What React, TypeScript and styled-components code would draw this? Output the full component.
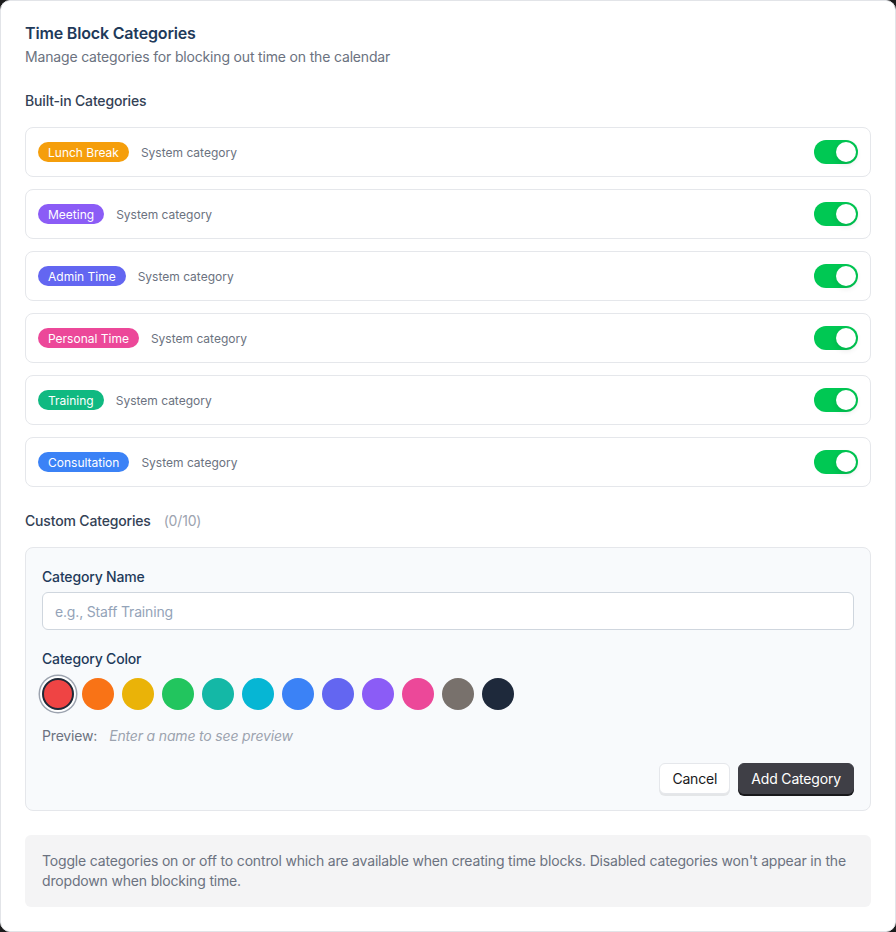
import { createGlobalStyle, styled } from 'styled-components';

const GlobalStyle = createGlobalStyle`
  html, body {
    margin: 0;
    padding: 0;
    background: #1c1c1c;
  }
  * {
    box-sizing: border-box;
  }
  body {
    font-family: Inter, "Liberation Sans", sans-serif;
    letter-spacing: -0.17px;
    -webkit-font-smoothing: antialiased;
  }
`;

// data

const builtIn = [
  { name: 'Lunch Break', color: '#f59e0b' },
  { name: 'Meeting', color: '#8b5cf6' },
  { name: 'Admin Time', color: '#6366f1' },
  { name: 'Personal Time', color: '#ec4899' },
  { name: 'Training', color: '#10b981' },
  { name: 'Consultation', color: '#3b82f6' },
];

const swatches = [
  '#ef4444',
  '#f97316',
  '#eab308',
  '#22c55e',
  '#14b8a6',
  '#06b6d4',
  '#3b82f6',
  '#6366f1',
  '#8b5cf6',
  '#ec4899',
  '#78716c',
  '#1e293b',
];

// card shell

const Card = styled.div`
  background: #ffffff;
  border: 1px solid #e2e4e8;
  border-radius: 10px;
  padding: 20px 24px 24px;
  display: flex;
  flex-direction: column;
`;

const Title = styled.h1`
  margin: 0;
  font-size: 16px;
  line-height: 24px;
  font-weight: 600;
  color: #1f3a5a;
`;

const Subtitle = styled.p`
  margin: 2px 0 0;
  font-size: 14px;
  line-height: 20px;
  color: #6b7280;
`;

const SectionHeading = styled.h2`
  margin: 24px 0 16px;
  font-size: 14px;
  line-height: 20px;
  font-weight: 500;
  color: #334155;
  display: flex;
  gap: 13px;
`;

const Count = styled.span`
  font-weight: 400;
  color: #9ca3af;
`;

// built-in rows

const RowList = styled.div`
  display: flex;
  flex-direction: column;
  gap: 12px;
`;

const Row = styled.div`
  height: 50px;
  border: 1px solid #e5e7eb;
  border-radius: 8px;
  padding: 0 12px;
  display: flex;
  align-items: center;
  gap: 12px;
`;

const Badge = styled.span<{ $color: string }>`
  display: inline-flex;
  align-items: center;
  height: 20px;
  padding: 0 10px;
  border-radius: 10px;
  background: ${({ $color }) => $color};
  color: #ffffff;
  font-size: 12px;
  font-weight: 400;
  letter-spacing: 0;
`;

const RowNote = styled.span`
  font-size: 12px;
  color: #6b7280;
  letter-spacing: 0;
  flex: 1;
`;

const Toggle = styled.button<{ $on: boolean }>`
  position: relative;
  width: 44px;
  height: 24px;
  border: none;
  border-radius: 12px;
  padding: 0;
  background: ${({ $on }) => ($on ? '#00c853' : '#d1d5db')};
  cursor: pointer;

  &::after {
    content: '';
    position: absolute;
    top: 2px;
    left: ${({ $on }) => ($on ? '22px' : '2px')};
    width: 20px;
    height: 20px;
    border-radius: 50%;
    background: #ffffff;
    box-shadow: 0 2px 6px rgba(0, 0, 0, 0.12);
  }
`;

// custom category form

const FormBox = styled.div`
  background: #f8fafc;
  border: 1px solid #e5e7eb;
  border-radius: 8px;
  padding: 19px 16px 16px;
  display: flex;
  flex-direction: column;
`;

const Label = styled.label`
  font-size: 14px;
  line-height: 20px;
  font-weight: 500;
  color: #1f3a5a;
`;

const TextInput = styled.input`
  margin: 5px 0 19px;
  height: 38px;
  width: 100%;
  border: 1px solid #cfd6de;
  border-radius: 6px;
  background: #ffffff;
  padding: 0 12px;
  font-family: inherit;
  font-size: 14px;
  letter-spacing: inherit;
  color: #111827;

  &::placeholder {
    color: #94a3b8;
  }
`;

const SwatchRow = styled.div`
  margin-top: 9px;
  display: flex;
  gap: 8px;
`;

const Swatch = styled.button<{ $color: string; $selected?: boolean }>`
  width: 32px;
  height: 32px;
  border-radius: 50%;
  padding: 0;
  background: ${({ $color }) => $color};
  border: ${({ $selected }) => ($selected ? '2px solid #1f2937' : 'none')};
  box-shadow: ${({ $selected }) =>
    $selected ? '0 0 0 2px #ffffff, 0 0 0 3.5px #9ca3af' : 'none'};
  cursor: pointer;
`;

const PreviewLine = styled.div`
  margin-top: 16px;
  font-size: 14px;
  line-height: 20px;
  display: flex;
  gap: 12px;
`;

const PreviewLabel = styled.span`
  color: #6b7280;
`;

const PreviewEmpty = styled.span`
  color: #9ca3af;
  font-style: italic;
`;

const Actions = styled.div`
  margin-top: 17px;
  display: flex;
  justify-content: flex-end;
  gap: 8px;
`;

const Button = styled.button<{ $primary?: boolean }>`
  height: 31px;
  padding: 0 12px;
  border-radius: 6px;
  font-family: inherit;
  font-size: 14px;
  font-weight: 400;
  letter-spacing: inherit;
  cursor: pointer;
  border: 1px solid ${({ $primary }) => ($primary ? '#3f3f46' : '#e5e7eb')};
  background: ${({ $primary }) => ($primary ? '#3f3f46' : '#ffffff')};
  color: ${({ $primary }) => ($primary ? '#ffffff' : '#18181b')};
  box-shadow: ${({ $primary }) =>
    $primary ? '0 2px 0 #18181b' : '0 2px 0 rgba(0, 0, 0, 0.08)'};
`;

// footer note

const InfoBox = styled.div`
  margin-top: 24px;
  background: #f4f4f5;
  border-radius: 6px;
  padding: 16px 16px 16px 17px;
  font-size: 14px;
  line-height: 20px;
  color: #6b7280;
`;

export default function App() {
  return (
    <>
      <GlobalStyle />
      <Card>
        <Title>Time Block Categories</Title>
        <Subtitle>Manage categories for blocking out time on the calendar</Subtitle>

        <SectionHeading>Built-in Categories</SectionHeading>
        <RowList>
          {builtIn.map((c) => (
            <Row key={c.name}>
              <Badge $color={c.color}>{c.name}</Badge>
              <RowNote>System category</RowNote>
              <Toggle $on aria-label={`Toggle ${c.name}`} />
            </Row>
          ))}
        </RowList>

        <SectionHeading>
          Custom Categories <Count>(0/10)</Count>
        </SectionHeading>
        <FormBox>
          <Label>Category Name</Label>
          <TextInput placeholder="e.g., Staff Training" />
          <Label>Category Color</Label>
          <SwatchRow>
            {swatches.map((s, i) => (
              <Swatch key={s} $color={s} $selected={i === 0} aria-label={s} />
            ))}
          </SwatchRow>
          <PreviewLine>
            <PreviewLabel>Preview:</PreviewLabel>
            <PreviewEmpty>Enter a name to see preview</PreviewEmpty>
          </PreviewLine>
          <Actions>
            <Button>Cancel</Button>
            <Button $primary>Add Category</Button>
          </Actions>
        </FormBox>

        <InfoBox>
          Toggle categories on or off to control which are available when creating time
          blocks. Disabled categories won't appear in the dropdown when blocking time.
        </InfoBox>
      </Card>
    </>
  );
}
